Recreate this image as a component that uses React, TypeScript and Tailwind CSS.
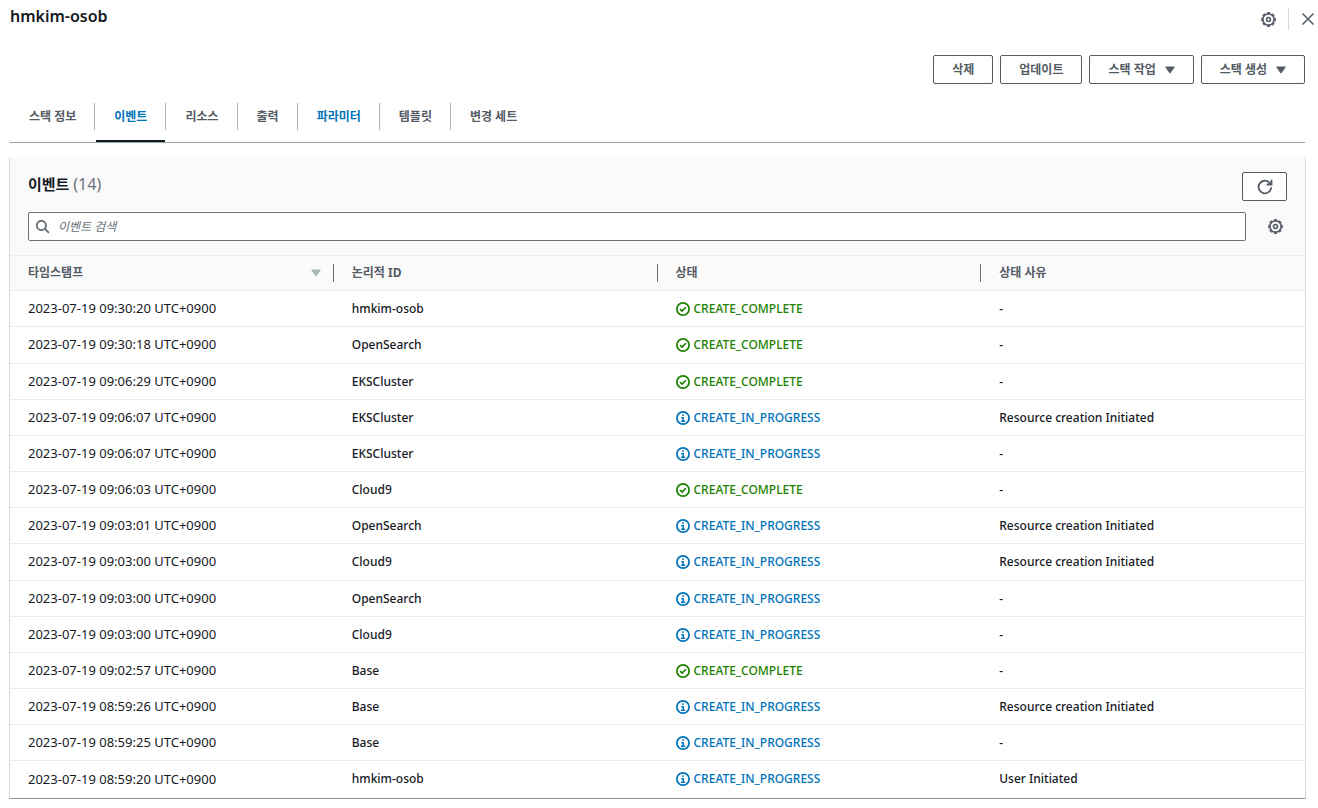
import { useState } from "react";

const GearIcon = ({ className = "w-4 h-4" }) => (
  <svg
    className={className}
    fill="none"
    stroke="currentColor"
    viewBox="0 0 16 16"
    aria-hidden="true"
  >
    <circle cx="8" cy="8" r="6" strokeWidth="1.8" />
    <circle
      cx="8"
      cy="8"
      r="7.2"
      strokeWidth="1.4"
      pathLength="16"
      strokeDasharray="1.2 0.8"
      strokeDashoffset="0.6"
    />
    <circle cx="8" cy="8" r="2.1" strokeWidth="1.7" />
  </svg>
);

const CloseIcon = ({ className = "w-4 h-4" }) => (
  <svg
    className={className}
    fill="none"
    stroke="currentColor"
    strokeWidth="1.5"
    viewBox="0 0 16 16"
    aria-hidden="true"
  >
    <path d="M2.5 2.5l11 11M13.5 2.5l-11 11" />
  </svg>
);

const RefreshIcon = ({ className = "w-4 h-4" }) => (
  <svg
    className={className}
    fill="none"
    stroke="currentColor"
    strokeWidth="1.8"
    viewBox="0 0 16 16"
    aria-hidden="true"
  >
    <path d="M14.2 8.2A6.3 6.3 0 1 1 12.4 3.600" />
    <path d="M14.5 .8v4.700H9.600" />
    <path d="M11.600 5L14.500 2.500V5z" fill="currentColor" strokeWidth="1" />
  </svg>
);

const SearchIcon = ({ className = "w-4 h-4" }) => (
  <svg
    className={className}
    fill="none"
    stroke="currentColor"
    strokeWidth="2"
    viewBox="0 0 16 16"
    aria-hidden="true"
  >
    <circle cx="6.8" cy="6.8" r="4.9" />
    <path d="M10.3 10.3l4.5 4.5" />
  </svg>
);

const CheckCircleIcon = ({ className = "w-4 h-4" }) => (
  <svg
    className={className}
    fill="none"
    stroke="currentColor"
    strokeWidth="2"
    viewBox="0 0 16 16"
    aria-hidden="true"
  >
    <circle cx="8" cy="8" r="7" />
    <path d="M4.6 8.1l2.4 2.3 4.3-4.4" />
  </svg>
);

const InfoCircleIcon = ({ className = "w-4 h-4" }) => (
  <svg
    className={className}
    fill="none"
    stroke="currentColor"
    strokeWidth="2"
    viewBox="0 0 16 16"
    aria-hidden="true"
  >
    <circle cx="8" cy="8" r="7" />
    <path d="M8 3.8v2M6 7.6h2.2v4M5.8 11.6h4.6" strokeWidth="1.7" />
  </svg>
);

const CaretIcon = ({ className = "w-2.5 h-2" }) => (
  <svg
    className={className}
    fill="currentColor"
    viewBox="0 0 10 8"
    aria-hidden="true"
  >
    <path d="M1 .5h8a.6.6 0 0 1 .5 1L5.4 7.2a.5.5 0 0 1-.8 0L.5 1.5a.6.6 0 0 1 .5-1z" />
  </svg>
);

type Status = "CREATE_COMPLETE" | "CREATE_IN_PROGRESS";

type StackEvent = {
  time: string;
  logicalId: string;
  status: Status;
  reason: string;
};

const DONE: Status = "CREATE_COMPLETE";
const PROGRESS: Status = "CREATE_IN_PROGRESS";
const INITIATED = "Resource creation Initiated";

const events: StackEvent[] = [
  { time: "09:30:20", logicalId: "hmkim-osob", status: DONE, reason: "-" },
  { time: "09:30:18", logicalId: "OpenSearch", status: DONE, reason: "-" },
  { time: "09:06:29", logicalId: "EKSCluster", status: DONE, reason: "-" },
  { time: "09:06:07", logicalId: "EKSCluster", status: PROGRESS, reason: INITIATED },
  { time: "09:06:07", logicalId: "EKSCluster", status: PROGRESS, reason: "-" },
  { time: "09:06:03", logicalId: "Cloud9", status: DONE, reason: "-" },
  { time: "09:03:01", logicalId: "OpenSearch", status: PROGRESS, reason: INITIATED },
  { time: "09:03:00", logicalId: "Cloud9", status: PROGRESS, reason: INITIATED },
  { time: "09:03:00", logicalId: "OpenSearch", status: PROGRESS, reason: "-" },
  { time: "09:03:00", logicalId: "Cloud9", status: PROGRESS, reason: "-" },
  { time: "09:02:57", logicalId: "Base", status: DONE, reason: "-" },
  { time: "08:59:26", logicalId: "Base", status: PROGRESS, reason: INITIATED },
  { time: "08:59:25", logicalId: "Base", status: PROGRESS, reason: "-" },
  { time: "08:59:20", logicalId: "hmkim-osob", status: PROGRESS, reason: "User Initiated" },
];

const tabs = [
  { label: "스택 정보" },
  { label: "이벤트" },
  { label: "리소스" },
  { label: "출력" },
  { label: "파라미터", highlighted: true },
  { label: "템플릿" },
  { label: "변경 세트" },
];

const columns = ["타임스탬프", "논리적 ID", "상태", "상태 사유"];

const actions = [
  { label: "삭제", menu: false },
  { label: "업데이트", menu: false },
  { label: "스택 작업", menu: true },
  { label: "스택 생성", menu: true },
];

function StatusLabel({ status }: { status: Status }) {
  const done = status === "CREATE_COMPLETE";
  return (
    <span
      className={`flex items-center gap-1 ${done ? "text-[#1d8102]" : "text-[#0073bb]"}`}
    >
      {done ? (
        <CheckCircleIcon className="w-3.5 h-3.5" />
      ) : (
        <InfoCircleIcon className="w-3.5 h-3.5" />
      )}
      {status}
    </span>
  );
}

export default function App() {
  const [activeTab, setActiveTab] = useState("이벤트");
  const [query, setQuery] = useState("");

  const rows = events.filter((e) =>
    `${e.logicalId} ${e.status} ${e.reason}`
      .toLowerCase()
      .includes(query.toLowerCase())
  );

  return (
    <div className="min-h-screen bg-white pb-2 font-['Noto_Sans','Noto_Sans_CJK_KR',sans-serif] text-xs text-[#16191f]">
      <header className="flex h-[38px] items-center justify-between pl-2.5 pr-0.5">
        <h1 className="pb-1.5 text-base leading-5 font-semibold">hmkim-osob</h1>
        <div className="flex items-center text-[#545b64]">
          <button className="px-3" aria-label="환경설정">
            <GearIcon className="w-[15px] h-[15px]" />
          </button>
          <span className="h-[22px] w-px bg-[#d5dbdb]" />
          <button className="pl-[11px]" aria-label="닫기">
            <CloseIcon />
          </button>
        </div>
      </header>

      <main className="pl-2.5 pr-[13px]">
        <div className="flex justify-end gap-[7px] pt-[17px]">
          {actions.map((a) => (
            <button
              key={a.label}
              className="flex h-[29px] items-center gap-[9px] rounded-xs border border-[#545b64] bg-white px-[18px] font-bold text-[#545b64]"
            >
              {a.label}
              {a.menu && <CaretIcon />}
            </button>
          ))}
        </div>

        <nav className="mt-[18px] border-b border-[#95a5a6]">
          <ul className="flex">
            {tabs.map((t) => {
              const active = t.label === activeTab;
              return (
                <li key={t.label} className="group flex h-10 items-start">
                  <button
                    onClick={() => setActiveTab(t.label)}
                    className={`ml-px h-10 border-b-2 px-[18px] pb-2 font-bold ${
                      active ? "border-[#16191f]" : "border-transparent"
                    } ${active || t.highlighted ? "text-[#0073bb]" : "text-[#545b64]"}`}
                  >
                    {t.label}
                  </button>
                  <span className="mt-px h-[27px] w-px bg-[#aab7b8] group-last:hidden" />
                </li>
              );
            })}
          </ul>
        </nav>

        <section className="-ml-px mt-3.5 -mr-px border-x border-b border-x-[#d5dbdb] border-b-[#879596]">
          <div className="bg-[#fafafa] px-[18px] pt-[15px] pb-3.5">
            <div className="flex items-start justify-between">
              <h2 className="text-[15px] leading-6 font-bold">
                이벤트{" "}
                <span className="text-base leading-5 font-normal text-[#687078]">
                  (14)
                </span>
              </h2>
              <button
                className="flex h-[29px] w-[45px] items-center justify-center rounded-xs border border-[#545b64] bg-white text-[#545b64]"
                aria-label="새로 고침"
              >
                <RefreshIcon />
              </button>
            </div>
            <div className="mt-[11px] flex items-center">
              <label className="flex h-[29px] flex-1 items-center gap-2 rounded-xs border border-[#687078] bg-white pl-1.5 text-[#687078]">
                <SearchIcon className="w-[15px] h-[15px]" />
                <input
                  type="text"
                  aria-label="이벤트 검색"
                  placeholder="이벤트 검색"
                  value={query}
                  onChange={(e) => setQuery(e.target.value)}
                  className="h-full flex-1 text-[#16191f] outline-none placeholder:text-[#687078] placeholder:italic"
                />
              </label>
              <button
                className="w-[41px] pl-[22px] text-[#545b64]"
                aria-label="테이블 설정"
              >
                <GearIcon className="w-[15px] h-[15px]" />
              </button>
            </div>
          </div>

          <table className="w-full table-fixed border-collapse text-left">
            <thead className="bg-[#fafafa] text-[#545b64]">
              <tr className="h-[35px] border-y border-[#eaeded]">
                {columns.map((c, i) => (
                  <th key={c} className="group p-0 font-bold">
                    <div className="flex h-[18px] items-center justify-between border-r border-[#687078] pr-3 pl-[18px] group-last:border-r-0">
                      {c}
                      {i === 0 && (
                        <CaretIcon className="w-2.5 h-2 text-[#aab7b8]" />
                      )}
                    </div>
                  </th>
                ))}
              </tr>
            </thead>
            <tbody className="font-medium">
              {rows.map((e, i) => (
                <tr
                  key={i}
                  className="h-9 border-b border-[#eaeded] last:border-b-0 nth-[6n+2]:h-[37px]"
                >
                  <td className="py-0 pr-3 pl-[18px] text-[13px] font-normal">
                    2023-07-19 {e.time} UTC+0900
                  </td>
                  <td className="py-0 pr-3 pl-[18px]">{e.logicalId}</td>
                  <td className="py-0 pr-3 pl-[18px]">
                    <StatusLabel status={e.status} />
                  </td>
                  <td className="py-0 pr-3 pl-[18px]">{e.reason}</td>
                </tr>
              ))}
            </tbody>
          </table>
        </section>
      </main>
    </div>
  );
}
